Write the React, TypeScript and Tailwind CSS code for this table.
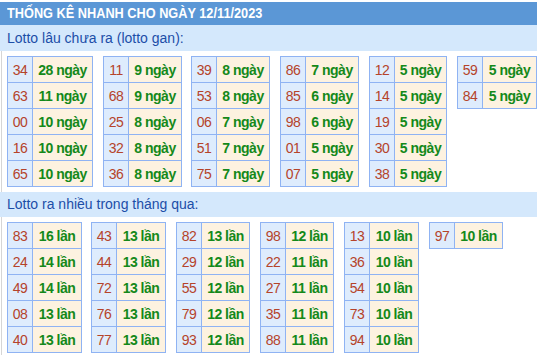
import React from "react";

type Row = [string, string];

const gan: Row[][] = [
  [["34", "28"], ["63", "11"], ["00", "10"], ["16", "10"], ["65", "10"]],
  [["11", "9"], ["68", "9"], ["25", "8"], ["32", "8"], ["36", "8"]],
  [["39", "8"], ["53", "8"], ["06", "7"], ["51", "7"], ["75", "7"]],
  [["86", "7"], ["85", "6"], ["98", "6"], ["01", "5"], ["07", "5"]],
  [["12", "5"], ["14", "5"], ["19", "5"], ["30", "5"], ["38", "5"]],
  [["59", "5"], ["84", "5"]],
];

const nhieu: Row[][] = [
  [["83", "16"], ["24", "14"], ["49", "14"], ["08", "13"], ["40", "13"]],
  [["43", "13"], ["44", "13"], ["72", "13"], ["76", "13"], ["77", "13"]],
  [["82", "13"], ["29", "12"], ["55", "12"], ["79", "12"], ["93", "12"]],
  [["98", "12"], ["22", "11"], ["27", "11"], ["35", "11"], ["88", "11"]],
  [["13", "10"], ["36", "10"], ["54", "10"], ["73", "10"], ["94", "10"]],
  [["97", "10"]],
];

const ganCls = [
  "w-[86px]",
  "w-[79px] ml-[10px]",
  "w-[79px] ml-[9px]",
  "w-[79px] ml-[10px]",
  "w-[78px] ml-[10px]",
  "w-[80px] ml-[10px]",
];

const nhieuCls = [
  "w-[75px]",
  "w-[75px] ml-[9px]",
  "w-[74px] ml-[10px]",
  "w-[74px] ml-[10px]",
  "w-[75px] ml-[10px]",
  "w-[74px] ml-[10px]",
];

function Tbl({ rows, unit, cls }: { rows: Row[]; unit: string; cls: string }) {
  return (
    <div className={"self-start shrink-0 border-l border-t border-[#8fb3f3] " + cls}>
      {rows.map(([n, c], i) => (
        <div key={i} className="flex h-[26px]">
          <div className="w-[25px] shrink-0 border-r border-b border-[#8fb3f3] bg-[#deecfd] flex items-center justify-center text-[#b5432a] text-[14px] tracking-[-0.6px] leading-none">
            {n}
          </div>
          <div className="flex-1 min-w-0 border-r border-b border-[#8fb3f3] bg-[#fdf2e0] flex items-center justify-center text-[#14891a] text-[14px] font-bold tracking-[-0.5px] leading-none whitespace-nowrap">
            {c} {unit}
          </div>
        </div>
      ))}
    </div>
  );
}

export default function App() {
  return (
    <div className="w-[537px] h-[355px] bg-white overflow-hidden font-['Liberation_Sans','Arial',sans-serif]">
      <div className="pt-[2px]">
        <div className="h-[23px] bg-[#5b97d6] px-[7px] flex items-center text-white font-bold text-[14px]">
          <span className="inline-block whitespace-nowrap origin-left scale-x-[0.91]">
            THỐNG KÊ NHANH CHO NGÀY 12/11/2023
          </span>
        </div>
        <div className="h-[26px] bg-[#d4e8fc] px-[7px] flex items-center text-[#1c4ea8] text-[14px]">
          Lotto lâu chưa ra (lotto gan):
        </div>
        <div className="ml-[1px] border-l border-[#d6d6d6] pl-[5px] pt-[5px] pb-[5px] flex">
          {gan.map((t, i) => (
            <Tbl key={i} rows={t} unit="ngày" cls={ganCls[i]} />
          ))}
        </div>
        <div className="h-[25px] bg-[#d4e8fc] px-[7px] flex items-center text-[#1c4ea8] text-[14px]">
          Lotto ra nhiều trong tháng qua:
        </div>
        <div className="ml-[1px] border-l border-[#d6d6d6] pl-[5px] pt-[5px] pb-[5px] flex">
          {nhieu.map((t, i) => (
            <Tbl key={i} rows={t} unit="lần" cls={nhieuCls[i]} />
          ))}
        </div>
      </div>
    </div>
  );
}
